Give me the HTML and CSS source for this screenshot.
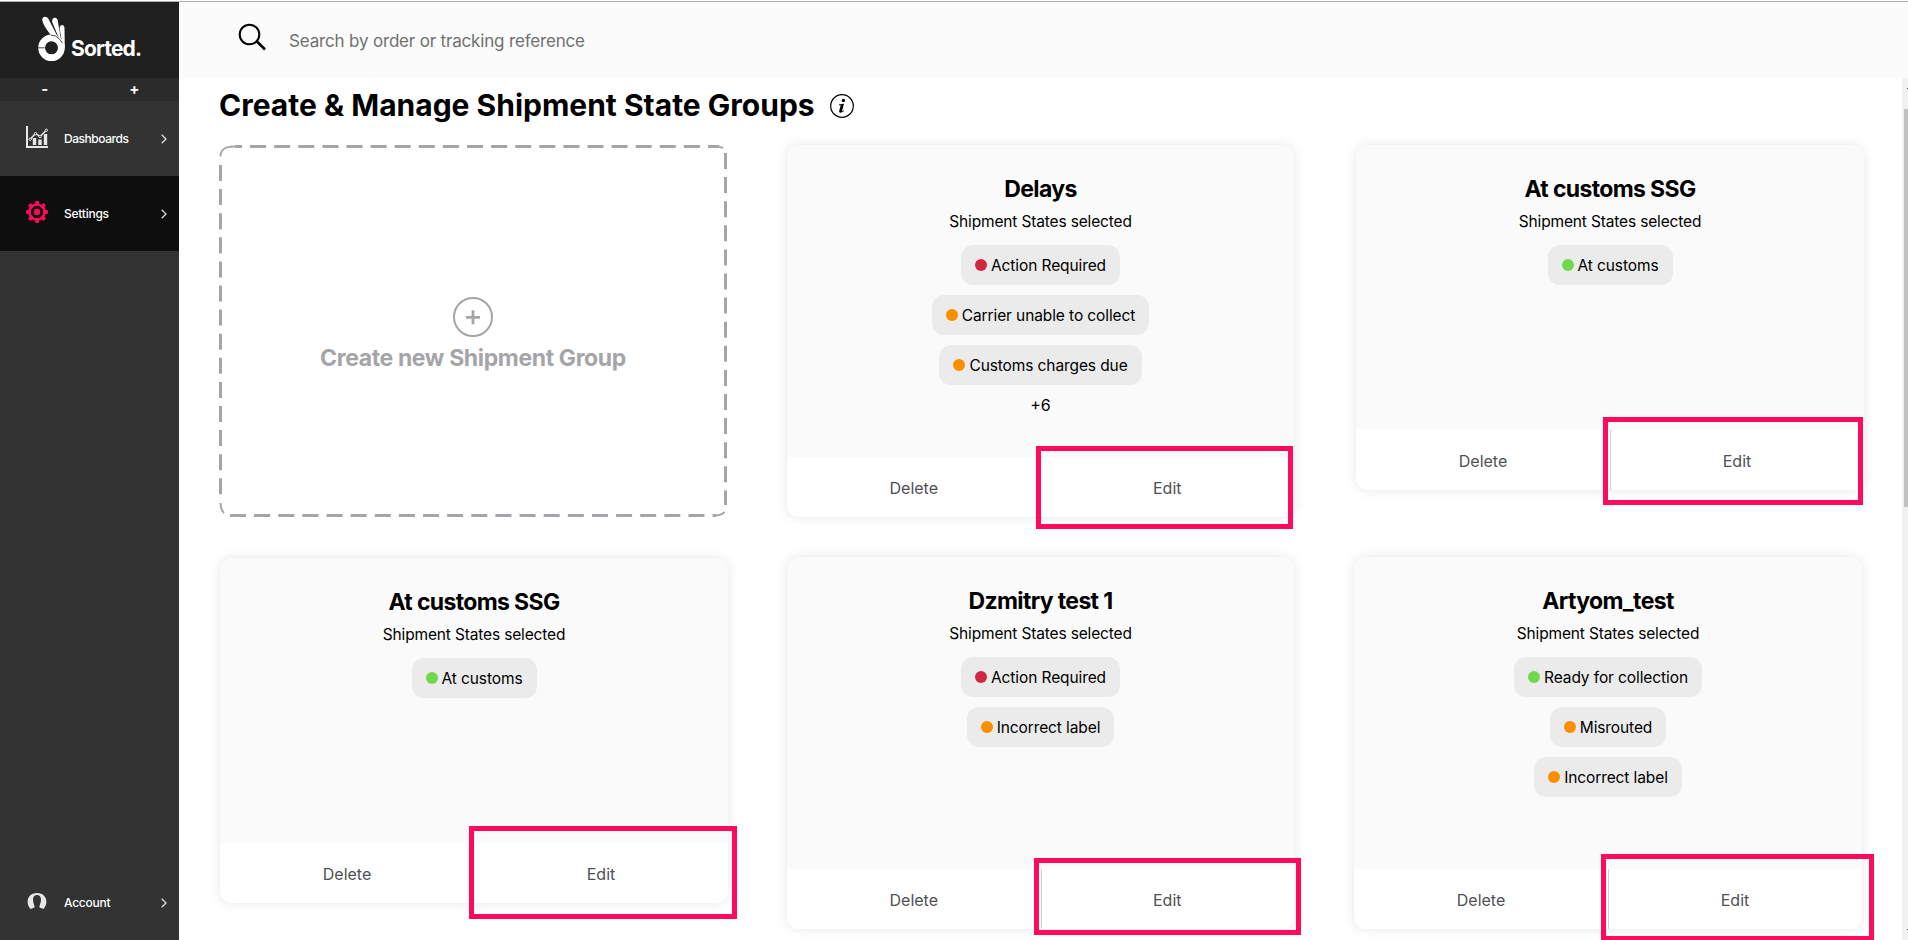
FILE: index.html
```html
<!DOCTYPE html>
<html lang="en">
<head>
<meta charset="utf-8">
<title>Shipment State Groups</title>
<link rel="stylesheet" href="styles.css">
</head>
<body>
<div class="app">
  <aside class="sidebar">
    <div class="logo">
      <svg class="logo-hand" width="28" height="46" viewBox="0 0 28 46">
        <circle cx="13.500" cy="31.800" r="9.900" fill="none" stroke="#fff" stroke-width="6.800"/>
        <path fill="#fff" d="M12.500 18.500C8 13 4.300 7 4.300 3.500C4.500 0 8.500 -.3 10.500 3L19.500 20.500Z"/>
        <path fill="#fff" d="M19.800 19.500L14.200 6C13.500 1.500 18 .3 19.600 3.800L23.200 25Z"/>
        <path fill="#fff" d="M23.600 24L21.600 12.500C21.700 8 26.200 8 26.500 12L26.800 33Z"/>
        <path d="M0 31.800H6.800M13 19.300Q17.500 18.800 21 22.500L24.500 27" stroke="#202020" stroke-width=".8" fill="none"/>
      </svg>
      <span class="logo-text">Sorted.</span>
    </div>
    <div class="zoom"><span>-</span><span>+</span></div>
    <a class="nav">
      <svg class="nav-icon" width="22" height="22" viewBox="0 0 22 22" fill="none" stroke="#e8e8e8">
        <path d="M1 0V21H22" stroke-width="2"/>
        <path d="M8.500 12V19M14 13.500V19M19.500 8V19" stroke-width="3.400"/>
        <path d="M4 13.500L9.500 7.500L14 10.500L20.500 4" stroke-width="1.500"/>
        <g fill="#333" stroke-width="1"><circle cx="4.200" cy="13.200" r="1.200"/><circle cx="9.500" cy="7.700" r="1.200"/><circle cx="14" cy="10.500" r="1.200"/><circle cx="20.300" cy="4.300" r="1.200"/></g>
      </svg>
      <span class="nav-label tight">Dashboards</span>
      <svg class="chevron" width="6" height="10" viewBox="0 0 6 10"><path d="M.7 .7L5 5L.7 9.300"/></svg>
    </a>
    <a class="nav nav-active">
      <svg class="nav-icon" width="22" height="22" viewBox="-11 -11 22 22">
        <g fill="#ff0a5c"><rect id="t" x="-2" y="-11" width="4" height="5" rx="1.300"/><use href="#t" transform="rotate(45)"/><use href="#t" transform="rotate(90)"/><use href="#t" transform="rotate(135)"/><use href="#t" transform="rotate(180)"/><use href="#t" transform="rotate(225)"/><use href="#t" transform="rotate(270)"/><use href="#t" transform="rotate(315)"/><circle r="3.200"/></g>
        <circle r="7.600" fill="none" stroke="#ff0a5c" stroke-width="2.400"/>
      </svg>
      <span class="nav-label">Settings</span>
      <svg class="chevron" width="6" height="10" viewBox="0 0 6 10"><path d="M.7 .7L5 5L.7 9.300"/></svg>
    </a>
    <a class="nav nav-account">
      <svg class="nav-icon" width="22" height="18" viewBox="0 0 22 18">
        <path fill="#e8e8e8" d="M4.500 17C-1 11 1.500 1 11 1S23 11 17.500 17L13.500 15.500C13 13.500 15 11.500 15 7.500C15 4.500 13.500 3 11 3S7 4.500 7 7.500C7 11.500 9 13.500 8.500 15.500Z"/>
      </svg>
      <span class="nav-label">Account</span>
      <svg class="chevron" width="6" height="10" viewBox="0 0 6 10"><path d="M.7 .7L5 5L.7 9.300"/></svg>
    </a>
  </aside>
  <div class="page">
    <header class="search">
      <svg width="28" height="28" viewBox="0 0 28 28" fill="none" stroke="#000"><circle cx="11.500" cy="11.500" r="9.800" stroke-width="2"/><path d="M18.500 18L27 26.500" stroke-width="2.600"/></svg>
      <span class="search-text">Search by order or tracking reference</span>
    </header>
    <div class="content">
      <main class="main">
        <div class="title-row">
          <h1 class="title">Create &amp; Manage Shipment State Groups</h1>
          <svg width="24" height="24" viewBox="0 0 24 24"><circle cx="12" cy="12" r="11.300" fill="none" stroke="#000" stroke-width="1.200"/><circle cx="13.400" cy="6.500" r="1.700"/><path d="M8.800 10.500L14 9.700L12.100 16.800C12 17.800 12.700 17.400 13.700 16.200L14.200 16.600C12.500 19 8.600 19.800 9.200 16.800L10.700 11.500L8.800 11.200Z"/></svg>
        </div>
        <div class="grid">
          <section class="create">
            <svg class="dashes" width="508" height="372" fill="none" stroke="#a5a5a9" stroke-width="3">
              <path d="M15.500 1.500H500" stroke-dasharray="16 8.100" stroke-dashoffset="8.500"/>
              <path d="M11 370.500H497" stroke-dasharray="16 8.130"/>
              <path d="M1.500 20V354" stroke-dasharray="16 8.100"/>
              <path d="M506.500 8V360" stroke-dasharray="16 8.100"/>
              <path d="M1.500 11.500C1.500 5 5 1.500 15.500 1.500M1.500 358C1.500 362 2.500 365.500 5 368M496 1.500Q501 1.500 504 3M496 370.500Q502 370.500 505.500 367" stroke-width="2"/>
            </svg>
            <svg width="40" height="40" viewBox="0 0 40 40" fill="none" stroke="#a5a5a9"><circle cx="20" cy="20" r="19" stroke-width="2"/><path d="M13 20.300H27M20 13.300V27.300" stroke-width="2.800"/></svg>
            <span class="create-text">Create new Shipment Group</span>
          </section>
          <section class="card">
            <div class="body">
              <h2 class="name">Delays</h2><p class="sub">Shipment States selected</p>
              <span class="pill"><i class="dot red"></i>Action Required</span>
              <span class="pill"><i class="dot orange"></i>Carrier unable to collect</span>
              <span class="pill"><i class="dot orange"></i>Customs charges due</span>
              <span class="more">+6</span>
            </div>
            <div class="actions"><span class="action">Delete</span><span class="action">Edit</span></div>
            <div class="mark mark-a"></div>
          </section>
          <section class="card short card-c">
            <div class="body">
              <h2 class="name">At customs SSG</h2><p class="sub">Shipment States selected</p>
              <span class="pill"><i class="dot green"></i>At customs</span>
            </div>
            <div class="actions"><span class="action">Delete</span><span class="action ruled">Edit</span></div>
            <div class="mark mark-b"></div>
          </section>
          <section class="card short card-d">
            <div class="body">
              <h2 class="name">At customs SSG</h2><p class="sub">Shipment States selected</p>
              <span class="pill"><i class="dot green"></i>At customs</span>
            </div>
            <div class="actions"><span class="action">Delete</span><span class="action">Edit</span></div>
            <div class="mark mark-c"></div>
          </section>
          <section class="card">
            <div class="body">
              <h2 class="name">Dzmitry test 1</h2><p class="sub">Shipment States selected</p>
              <span class="pill"><i class="dot red"></i>Action Required</span>
              <span class="pill"><i class="dot orange"></i>Incorrect label</span>
            </div>
            <div class="actions"><span class="action">Delete</span><span class="action ruled">Edit</span></div>
            <div class="mark mark-d"></div>
          </section>
          <section class="card card-f">
            <div class="body">
              <h2 class="name">Artyom_test</h2><p class="sub">Shipment States selected</p>
              <span class="pill"><i class="dot green"></i>Ready for collection</span>
              <span class="pill"><i class="dot orange"></i>Misrouted</span>
              <span class="pill"><i class="dot orange"></i>Incorrect label</span>
            </div>
            <div class="actions"><span class="action">Delete</span><span class="action ruled">Edit</span></div>
            <div class="mark mark-e"></div>
          </section>
        </div>
      </main>
      <div class="scrollbar"><i class="arrow"></i><div class="thumb"></div><i class="arrow arrow-down"></i></div>
    </div>
  </div>
</div>
</body>
</html>
```

FILE: styles.css
```css
* { box-sizing: border-box; }
body { margin: 0; background: #fff; color: #000; font-family: Inter, "Liberation Sans", sans-serif; overflow: hidden; }
h1, h2, p { margin: 0; }
svg { display: block; flex: none; }

.app { display: flex; height: 940px; padding-top: 1px; overflow: hidden; }
.sidebar { width: 179px; flex: none; display: flex; flex-direction: column; background: #333; color: #fff; border-top: 1px solid #aeaeae; }
.logo { height: 76px; background: #202020; display: flex; align-items: flex-start; padding: 14px 0 0 38px; }
.logo-text { font-size: 21px; font-weight: 700; line-height: 26px; margin: 20px 0 0 5px; letter-spacing: -0.8px; }
.zoom { height: 23px; background: #2b2b2b; display: flex; font-size: 15px; font-weight: 700; line-height: 22px; }
.zoom span { flex: 1; text-align: center; }
.nav { height: 75px; display: flex; align-items: center; padding: 0 12px 0 26px; }
.nav-active { background: #0e0e0e; }
.nav-account { margin-top: auto; height: 75px; }
.nav-icon { margin: -3px 16px 0 0; }
.nav-label { flex: 1; font-size: 12px; font-weight: 500; letter-spacing: -0.25px; }
.tight { letter-spacing: -0.45px; }
.chevron path { fill: none; stroke: #ddd; stroke-width: 1.3; }

.page { flex: 1; display: flex; flex-direction: column; border-top: 1px solid #aeaeae; }
.search { height: 76px; flex: none; background: #fbfbfb; display: flex; padding: 21px 0 0 59px; }
.search-text { margin: 5px 0 0 23px; font-size: 17px; line-height: 26px; letter-spacing: -0.17px; color: #707070; }
.content { flex: 1; display: flex; min-height: 0; }
.main { flex: 1; padding-left: 40px; }
.title-row { height: 67px; display: flex; align-items: flex-start; gap: 15px; }
.title-row svg { margin-top: 16px; }
.title { width: 596px; white-space: nowrap; font-size: 30px; font-weight: 700; line-height: 40px; margin-top: 7px; letter-spacing: 0; }

.grid { display: grid; grid-template-columns: repeat(3, 508px); grid-template-rows: 372px 372px; gap: 40px 60px; }
.create { position: relative; display: flex; flex-direction: column; align-items: center; padding-top: 152px; }
.dashes { position: absolute; inset: 0; }
.create-text { margin-top: 5px; font-size: 23px; line-height: 32px; font-weight: 700; letter-spacing: -0.37px; color: #a5a5a9; }

.card { position: relative; width: 507px; height: 372px; display: flex; flex-direction: column; border-radius: 12px; background: #fff; box-shadow: 0 0 12px rgba(0, 0, 0, 0.1); }
.short { height: 345px; }
.card-c { width: 508px; margin-left: 1px; }
.card-d { width: 508px; margin: 1px 0 0 1px; }
.card-f { width: 508px; margin-left: -1px; }
.body { flex: 1; display: flex; flex-direction: column; align-items: center; padding-top: 28px; background: #fafafa; border-radius: 12px 12px 0 0; }
.name { font-size: 23px; font-weight: 700; line-height: 32px; letter-spacing: -0.65px; }
.sub { font-size: 15.5px; line-height: 24px; margin: 5px 0 11px; letter-spacing: -0.15px; }
.pill { height: 40px; margin-bottom: 10px; padding: 0 14px; display: flex; align-items: center; background: #ebebeb; border-radius: 12px; font-size: 15.5px; letter-spacing: -0.1px; }
.dot { width: 12px; height: 12px; margin: -1px 4px 0 0; border-radius: 50%; }
.red { background: #cf2940; }
.orange { background: #f98f00; }
.green { background: #72d84b; }
.more { font-size: 16px; line-height: 20px; }
.actions { height: 60px; display: flex; }
.action { flex: 1; text-align: center; font-size: 16px; line-height: 62px; color: #505055; }
.ruled { box-shadow: inset 1px 0 #cfcfcf; }

.mark { position: absolute; border: 5px solid #ff0a5c; }
.mark-a { left: 249px; top: 301px; width: 257px; height: 83px; }
.mark-b { left: 247px; top: 272px; width: 260px; height: 88px; }
.mark-c { left: 249px; top: 268px; width: 268px; height: 93px; }
.mark-d { left: 247px; top: 301px; width: 267px; height: 77px; }
.mark-e { left: 247px; top: 297px; width: 273px; height: 87px; }

.scrollbar { width: 6px; background: #f1f1f1; padding-left: 2px; display: flex; flex-direction: column; }
.arrow { width: 1px; height: 1px; margin: 10px 0 20px 3px; background: #505050; }
.thumb { height: 398px; background: #c1c1c1; }
.arrow-down { margin: auto 0 10px 3px; }
```
